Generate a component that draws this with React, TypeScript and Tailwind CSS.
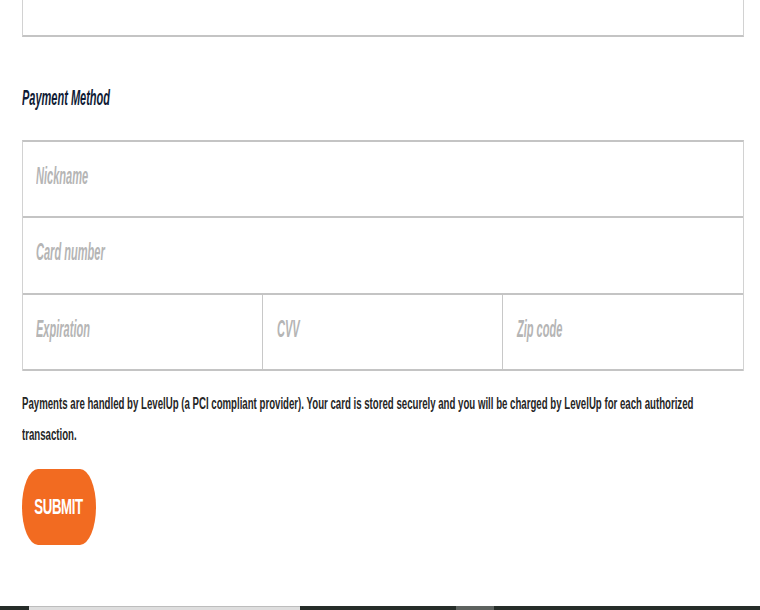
import React from 'react';

const font = "font-['Liberation_Sans',Arial,sans-serif]";

const Placeholder: React.FC<{ label: string }> = ({ label }) => (
    <span className="inline-block origin-left scale-x-[0.48] text-[23px] leading-[23px] font-bold italic text-[#b5b5b5] whitespace-nowrap">
        {label}
    </span>
);

const App: React.FC = () => {
    return (
        <div className={`${font} relative flex h-[610px] w-[760px] flex-col overflow-hidden bg-white`}>
            <div className="px-[22px]">
                {/* tail of the previous field */}
                <div className="h-[37px] w-[722px] border-x border-b-2 border-x-[#d2d2d2] border-b-[#c4c4c4]" />

                <h2 className="mt-[50px] h-[22px] text-[22px] leading-[22px] font-bold italic text-[#0f1b35]">
                    <span className="inline-block origin-left scale-x-[0.5] whitespace-nowrap">Payment Method</span>
                </h2>

                <div className="mt-[31px] w-[722px] border-x border-t-2 border-x-[#d2d2d2] border-t-[#c4c4c4]">
                    <div className="h-[76px] border-b-2 border-[#c4c4c4] pl-[13px] pt-[23px]">
                        <Placeholder label="Nickname" />
                    </div>
                    <div className="h-[77px] border-b-2 border-[#c4c4c4] pl-[13px] pt-[23px]">
                        <Placeholder label="Card number" />
                    </div>
                    <div className="grid h-[76px] grid-cols-3 border-b-2 border-[#c4c4c4]">
                        <div className="border-r border-[#c8c8c8] pl-[13px] pt-[23px]">
                            <Placeholder label="Expiration" />
                        </div>
                        <div className="border-r border-[#c8c8c8] pl-[14px] pt-[23px]">
                            <Placeholder label="CVV" />
                        </div>
                        <div className="pl-[14px] pt-[23px]">
                            <Placeholder label="Zip code" />
                        </div>
                    </div>
                </div>

                <div className="mt-[17px] w-[722px] overflow-hidden">
                    <p className="w-[1160px] origin-left scale-x-[0.603] text-[16px] leading-[31px] font-bold text-[#262626]">
                        Payments are handled by LevelUp (a PCI compliant provider). Your card is stored securely and you will be charged by LevelUp for each authorized transaction.
                    </p>
                </div>

                <button className="mt-[19px] flex h-[76px] w-[74px] items-center justify-center rounded-[16px/38px] bg-[#f26b21] text-white">
                    <span className="inline-block scale-x-[0.6] text-[22px] leading-[22px] font-bold tracking-tight">SUBMIT</span>
                </button>
            </div>

            <div className="flex-1" />

            {/* top edge of the footer */}
            <div className="flex h-[4px] w-full">
                <div className="w-[29px] bg-[#262d29]" />
                <div className="w-[271px] border-t border-[#bdbdbd] bg-[#dedede]" />
                <div className="w-[156px] bg-[#262d29]" />
                <div className="w-[38px] bg-[#5d625f]" />
                <div className="flex-1 bg-[#262d29]" />
            </div>
        </div>
    );
};

export default App;
